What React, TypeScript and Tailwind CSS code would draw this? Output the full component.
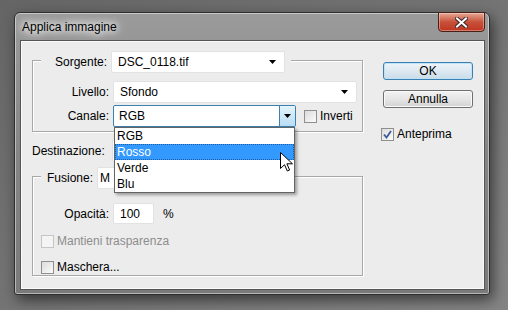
import React from "react";

const font = { fontFamily: '"Liberation Sans", Arial, sans-serif' };

function Arrow() {
  return (
    <svg width="7" height="4" viewBox="0 0 7 4" className="shrink-0">
      <path d="M0 0h7L3.5 4z" fill="#000" />
    </svg>
  );
}

function Combo({ value, width, active, pad = 6 }: { value: string; width: number; active?: boolean; pad?: number }) {
  if (active) {
    return (
      <div style={{ width }} className="flex h-[22px] items-stretch rounded-[2px] border border-[#3c7fb1] bg-white">
        <div className="flex flex-1 items-center pl-[5px]">{value}</div>
        <div className="flex w-[16px] items-center justify-center border-l border-[#3c7fb1] bg-gradient-to-b from-[#e5f4fc] to-[#b8dcf3]">
          <Arrow />
        </div>
      </div>
    );
  }
  return (
    <div style={{ width, paddingLeft: pad }} className="flex h-[22px] items-center justify-between rounded-[2px] border border-[#e2e2e2] bg-white pr-[8px]">
      <span className="whitespace-nowrap">{value}</span>
      <Arrow />
    </div>
  );
}

function Check({ checked, disabled }: { checked?: boolean; disabled?: boolean }) {
  return (
    <div
      className={`flex h-[13px] w-[13px] shrink-0 items-center justify-center border ${
        disabled ? "border-[#c6c6c6] bg-[#f4f4f4]" : "border-[#8e8f8f] bg-gradient-to-br from-[#dcdcdc] to-[#fbfbfb]"
      }`}
    >
      {checked ? (
        <svg width="9" height="9" viewBox="0 0 9 9">
          <path d="M1 4.5l2.5 3L8 1" stroke="#3d5a98" strokeWidth="1.8" fill="none" />
        </svg>
      ) : null}
    </div>
  );
}

function Button({ label, focused }: { label: string; focused?: boolean }) {
  return (
    <div
      className={`flex h-[18px] w-[90px] items-center justify-center rounded-[3px] border ${
        focused
          ? "border-[#3c7fb1] bg-gradient-to-b from-[#eef5fa] via-[#dde9f2] to-[#c9dbe8] shadow-[inset_0_0_0_1px_#bfe3f6]"
          : "border-[#707070] bg-gradient-to-b from-[#f2f2f2] via-[#e6e6e6] to-[#d2d2d2] shadow-[inset_0_0_0_1px_#fafafa]"
      }`}
    >
      {label}
    </div>
  );
}

function Cursor() {
  return (
    <svg width="13" height="20" viewBox="0 0 13 20">
      <path d="M0.5 0.5v16l4-3.8 2.8 6.3 2.3-1-2.7-6.2h5.6z" fill="#fff" stroke="#000" strokeWidth="1" strokeLinejoin="round" />
    </svg>
  );
}

export default function App() {
  return (
    <div style={font} className="h-[310px] w-[508px] overflow-hidden bg-gradient-to-br from-[#656565] via-[#747474] to-[#858585] pl-[14px] pt-[12px] text-[12px] text-black">
      {/* window */}
      <div className="flex h-[283px] w-[476px] flex-col rounded-t-[6px] rounded-b-[3px] border border-[#2e2e2e] bg-gradient-to-b from-[#9b9b9b] via-[#858585] to-[#7a7a7a] pb-[4px] pl-[5px] pr-[4px] shadow-[3px_5px_14px_rgba(0,0,0,0.55),inset_0_0_0_1px_rgba(255,255,255,0.45)]">
        <div className="flex h-[27px] items-start justify-between">
          <div className="flex h-[27px] items-center pl-[2px] [text-shadow:0_0_6px_#fff,0_0_10px_#fff,0_0_14px_#fff]">
            Applica immagine
          </div>
          <div className="-mt-[1px] flex h-[20px] w-[47px] items-center justify-center rounded-b-[4px] border border-[#4a1f16] bg-gradient-to-b from-[#e5a795] via-[#c7503a] to-[#c0351f] shadow-[inset_0_0_0_1px_rgba(255,255,255,0.35)]">
            <svg width="13" height="11" viewBox="0 0 13 11">
              <path d="M2 1.5l9 8M11 1.5l-9 8" stroke="#3a2a2a" strokeWidth="4" strokeLinecap="square" />
              <path d="M2 1.5l9 8M11 1.5l-9 8" stroke="#fff" strokeWidth="2" strokeLinecap="square" />
            </svg>
          </div>
        </div>

        {/* client */}
        <div className="relative flex h-[250px] w-[465px] border border-[#555] bg-[#ececec] shadow-[inset_0_0_0_1px_#fafafa]">
          <div className="w-[342px] pl-[11px]">
            {/* Sorgente group */}
            <div className="mt-[19px] h-[72px] border border-[#a8a8a8] shadow-[1px_1px_0_#fff,inset_1px_1px_0_#fff]">
              <div className="-mt-[10px] ml-[8px] flex w-fit items-center bg-[#ececec] pr-[6px]">
                <div className="w-[70px] pr-[4px] text-right">Sorgente:</div>
                <Combo value="DSC_0118.tif" width={174} />
              </div>
              <div className="mt-[8px] flex items-center">
                <div className="w-[76px] text-right">Livello:</div>
                <div className="ml-[4px]">
                  <Combo value="Sfondo" width={244} />
                </div>
              </div>
              <div className="mt-[2px] flex items-center">
                <div className="w-[76px] text-right">Canale:</div>
                <div className="ml-[4px]">
                  <Combo value="RGB" width={183} active />
                </div>
                <div className="ml-[8px] flex items-center gap-[3px]">
                  <Check />
                  <span>Inverti</span>
                </div>
              </div>
            </div>

            {/* Destinazione */}
            <div className="mt-[8px] flex items-center">
              <div className="w-[80px]">Destinazione:</div>
              <Combo value="" width={181} />
            </div>

            {/* Fusione group */}
            <div className="mt-[14px] h-[100px] border border-[#a8a8a8] shadow-[1px_1px_0_#fff,inset_1px_1px_0_#fff]">
              <div className="-mt-[10px] ml-[8px] flex w-fit items-center bg-[#ececec] pr-[6px]">
                <div className="pl-[6px] pr-[4px]">Fusione:</div>
                <Combo value="M" width={170} pad={2} />
              </div>
              <div className="mt-[14px] flex items-center">
                <div className="w-[76px] text-right">Opacità:</div>
                <div className="ml-[4px] flex h-[21px] w-[41px] items-center rounded-[2px] border border-[#e2e2e2] bg-white pl-[6px]">
                  100
                </div>
                <div className="ml-[9px]">%</div>
              </div>
              <div className="ml-[8px] mt-[8px] flex items-center gap-[3px] text-[#8d8d8d]">
                <Check disabled />
                <span>Mantieni trasparenza</span>
              </div>
              <div className="ml-[8px] mt-[8px] flex items-center gap-[3px]">
                <Check />
                <span>Maschera...</span>
              </div>
            </div>
          </div>

          {/* buttons */}
          <div className="ml-[20px] flex flex-col pt-[21px]">
            <Button label="OK" focused />
            <div className="mt-[10px]">
              <Button label="Annulla" />
            </div>
            <div className="-ml-[2px] mt-[17px] flex items-center gap-[3px]">
              <Check checked />
              <span>Anteprima</span>
            </div>
          </div>

          {/* open dropdown list */}
          <div className="absolute left-[93px] top-[86px] w-[181px] border border-[#646464] bg-white shadow-[2px_2px_3px_rgba(0,0,0,0.35)]">
            <div className="flex h-[16px] items-center pl-[2px]">RGB</div>
            <div className="flex h-[16px] items-center bg-[#3399ff] pl-[2px] text-white outline outline-1 -outline-offset-1 outline-dotted outline-[#1f5f9f]">
              Rosso
            </div>
            <div className="flex h-[16px] items-center pl-[2px]">Verde</div>
            <div className="flex h-[16px] items-center pl-[2px]">Blu</div>
          </div>

          <div className="absolute left-[259px] top-[111px]">
            <Cursor />
          </div>
        </div>
      </div>
    </div>
  );
}
